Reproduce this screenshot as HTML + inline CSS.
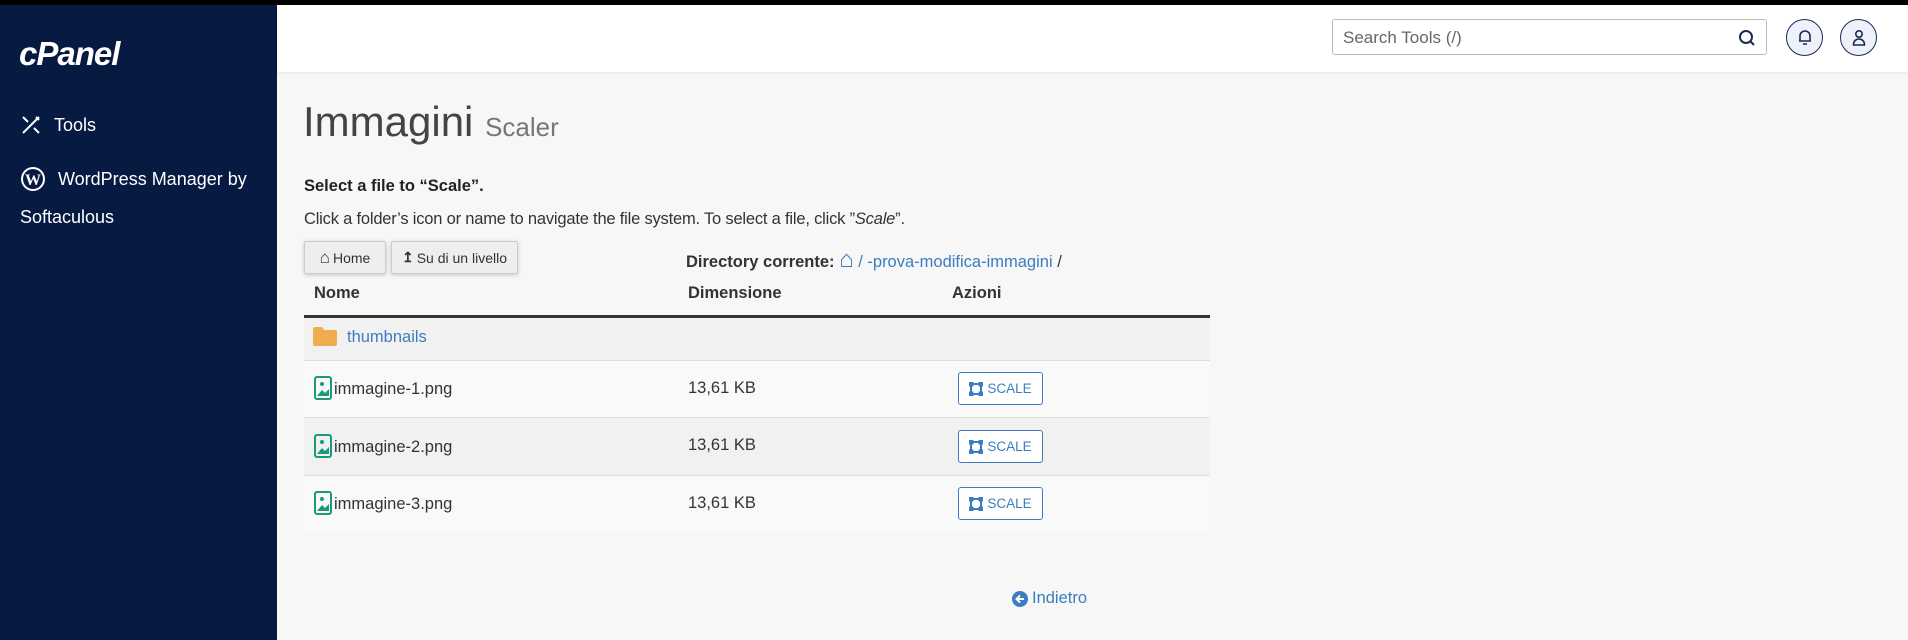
<!DOCTYPE html>
<html><head><meta charset="utf-8"><style>
*{box-sizing:border-box;margin:0;padding:0}
body{width:1908px;height:640px;overflow:hidden;background:#f7f7f7;font-family:"Liberation Sans",sans-serif;position:relative;color:#222}
.abs{position:absolute}
#top{left:0;top:0;width:1908px;height:5px;background:#000}
#side{left:0;top:5px;width:277px;height:635px;background:#061a42;color:#fff}
#hdr{left:277px;top:5px;width:1631px;height:67px;background:#fff;box-shadow:0 1px 3px rgba(0,0,0,.08)}
.side-item{position:absolute;left:20px;font-size:18px;color:#fff;display:flex;align-items:center}
.btn{position:absolute;height:33px;border:1px solid #ccc;background:#eee;border-radius:2px;box-shadow:0 1px 4px rgba(0,0,0,.2);font-size:14px;color:#333;display:flex;align-items:center;justify-content:center;gap:3px}
.row{position:absolute;left:304px;width:906px;border-bottom:1px solid #ddd}
.fname{position:absolute;left:334px;font-size:16.5px;color:#333}
.size{position:absolute;left:688px;font-size:16.5px;color:#333}
.scale{position:absolute;left:958px;width:85px;height:33px;border:1px solid #3b7dc0;border-radius:3px;color:#3b7dc0;font-size:13.5px;display:flex;align-items:center;justify-content:center;gap:4px;background:#fff}
.ficon{position:absolute;left:314px}
</style></head><body>
<div id="top" class="abs"></div>
<div id="side" class="abs">
  <div class="abs" style="left:19px;top:30px;font-size:33px;font-weight:bold;font-style:italic;letter-spacing:-1px;color:#fff">cPanel</div>
  <div class="side-item" style="top:109px">
    <svg width="22" height="22" viewBox="0 0 22 22" fill="none" stroke="#fff" stroke-width="2"><path d="M3 19L19 3M3 3l5 5M14 14l5 5M16 3l3 3"/></svg>
    <span style="margin-left:12px">Tools</span></div>
  <div class="side-item" style="top:161px">
    <svg width="26" height="26" viewBox="0 0 26 26"><circle cx="13" cy="13" r="12" fill="#fff"/><circle cx="13" cy="13" r="10" fill="#061a42"/><text x="13" y="19" font-family="Liberation Serif" font-size="16" font-weight="bold" fill="#fff" text-anchor="middle">W</text></svg>
    <span style="margin-left:12px">WordPress Manager by</span></div>
  <div class="side-item" style="top:202px;left:20px">Softaculous</div>
</div>
<div id="hdr" class="abs">
  <div class="abs" style="left:1055px;top:14px;width:435px;height:36px;border:1px solid #bbb;border-radius:3px;background:#fff">
    <span class="abs" style="left:10px;top:8px;font-size:17px;color:#666">Search Tools (/)</span>
    <svg class="abs" style="left:405px;top:9px" width="18" height="18" viewBox="0 0 18 18" fill="none" stroke="#1a2a55" stroke-width="2"><circle cx="8" cy="8" r="6"/><path d="M12.5 12.5L16 16"/></svg>
  </div>
  <div class="abs" style="left:1509px;top:14px;width:37px;height:37px;border:1.5px solid #1a2a55;border-radius:50%;background:#eef0fa">
    <svg class="abs" style="left:10px;top:9px" width="16" height="17" viewBox="0 0 16 17" fill="none" stroke="#1a2a55" stroke-width="1.6"><path d="M3 12V7a5 5 0 0110 0v5M2 12h12M6 15h4"/></svg></div>
  <div class="abs" style="left:1563px;top:14px;width:37px;height:37px;border:1.5px solid #1a2a55;border-radius:50%;background:#eef0fa">
    <svg class="abs" style="left:10px;top:9px" width="16" height="17" viewBox="0 0 16 17" fill="none" stroke="#1a2a55" stroke-width="1.6"><circle cx="8" cy="5" r="3.2"/><path d="M2.5 16c0-4 2.5-6 5.5-6s5.5 2 5.5 6z"/></svg></div>
</div>
<div class="abs" style="left:303px;top:98px;font-size:42px;color:#444">Immagini <span style="font-size:26px;color:#777">Scaler</span></div>
<div class="abs" style="left:304px;top:177px;font-size:16.5px;font-weight:bold">Select a file to “Scale”.</div>
<div class="abs" style="left:304px;top:210px;font-size:16.5px;color:#333;letter-spacing:-0.2px">Click a folder’s icon or name to navigate the file system. To select a file, click ”<i>Scale</i>”.</div>
<div class="btn" style="left:304px;top:241px;width:82px"><span style="font-size:17px">⌂</span><span>Home</span></div>
<div class="btn" style="left:391px;top:241px;width:127px"><b>↥</b><span>Su di un livello</span></div>
<div class="abs" style="left:686px;top:246px;font-size:16.5px;font-weight:bold;color:#333">Directory corrente: <span style="color:#3b7dc0;font-weight:normal"><span style="font-size:24px;font-weight:bold">⌂</span> / -prova-modifica-immagini </span><span style="font-weight:normal">/</span></div>
<div class="abs" style="left:314px;top:284px;font-size:16.5px;font-weight:bold;color:#333">Nome</div>
<div class="abs" style="left:688px;top:284px;font-size:16.5px;font-weight:bold;color:#333">Dimensione</div>
<div class="abs" style="left:952px;top:284px;font-size:16.5px;font-weight:bold;color:#333">Azioni</div>
<div class="abs" style="left:304px;top:315px;width:906px;height:3px;background:#333"></div>
<div class="row" style="top:318px;height:43px;background:#f1f1f1"></div>
<div class="row" style="top:361px;height:57px;background:#f9f9f9"></div>
<div class="row" style="top:418px;height:58px;background:#f1f1f1"></div>
<div class="row" style="top:476px;height:57px;background:#f9f9f9;border-bottom:none"></div>
<svg class="abs" style="left:313px;top:327px" width="24" height="19" viewBox="0 0 24 19"><path d="M0 2a2 2 0 012-2h7l2 3h11a2 2 0 012 2v12a2 2 0 01-2 2H2a2 2 0 01-2-2z" fill="#f0ad4e"/></svg>
<div class="abs" style="left:347px;top:328px;font-size:16.5px;color:#3b7dc0">thumbnails</div>
<svg class="ficon" style="top:376px" width="18" height="24" viewBox="0 0 18 24"><rect x="1" y="1" width="16" height="22" rx="2" fill="none" stroke="#1a9a7a" stroke-width="2"/><circle cx="8" cy="8" r="2" fill="#1a9a7a"/><path d="M3 20l5-6 3 3 4-4v7z" fill="#1a9a7a"/></svg>
<div class="fname" style="top:380px">immagine-1.png</div>
<svg class="ficon" style="top:434px" width="18" height="24" viewBox="0 0 18 24"><rect x="1" y="1" width="16" height="22" rx="2" fill="none" stroke="#1a9a7a" stroke-width="2"/><circle cx="8" cy="8" r="2" fill="#1a9a7a"/><path d="M3 20l5-6 3 3 4-4v7z" fill="#1a9a7a"/></svg>
<div class="fname" style="top:438px">immagine-2.png</div>
<svg class="ficon" style="top:491px" width="18" height="24" viewBox="0 0 18 24"><rect x="1" y="1" width="16" height="22" rx="2" fill="none" stroke="#1a9a7a" stroke-width="2"/><circle cx="8" cy="8" r="2" fill="#1a9a7a"/><path d="M3 20l5-6 3 3 4-4v7z" fill="#1a9a7a"/></svg>
<div class="fname" style="top:495px">immagine-3.png</div>
<div class="size" style="top:379px">13,61 KB</div>
<div class="size" style="top:436px">13,61 KB</div>
<div class="size" style="top:494px">13,61 KB</div>
<div class="scale" style="top:372px"><svg width="14" height="14" viewBox="0 0 14 14" fill="none" stroke="#3b7dc0" stroke-width="2"><rect x="2" y="2" width="10" height="10"/><rect x="0.5" y="0.5" width="3" height="3" fill="#3b7dc0"/><rect x="10.5" y="0.5" width="3" height="3" fill="#3b7dc0"/><rect x="0.5" y="10.5" width="3" height="3" fill="#3b7dc0"/><rect x="10.5" y="10.5" width="3" height="3" fill="#3b7dc0"/></svg>SCALE</div>
<div class="scale" style="top:430px"><svg width="14" height="14" viewBox="0 0 14 14" fill="none" stroke="#3b7dc0" stroke-width="2"><rect x="2" y="2" width="10" height="10"/><rect x="0.5" y="0.5" width="3" height="3" fill="#3b7dc0"/><rect x="10.5" y="0.5" width="3" height="3" fill="#3b7dc0"/><rect x="0.5" y="10.5" width="3" height="3" fill="#3b7dc0"/><rect x="10.5" y="10.5" width="3" height="3" fill="#3b7dc0"/></svg>SCALE</div>
<div class="scale" style="top:487px"><svg width="14" height="14" viewBox="0 0 14 14" fill="none" stroke="#3b7dc0" stroke-width="2"><rect x="2" y="2" width="10" height="10"/><rect x="0.5" y="0.5" width="3" height="3" fill="#3b7dc0"/><rect x="10.5" y="0.5" width="3" height="3" fill="#3b7dc0"/><rect x="0.5" y="10.5" width="3" height="3" fill="#3b7dc0"/><rect x="10.5" y="10.5" width="3" height="3" fill="#3b7dc0"/></svg>SCALE</div>
<div class="abs" style="left:1012px;top:589px;font-size:16.5px;color:#3b7dc0;display:flex;align-items:center;gap:4px"><svg width="16" height="16" viewBox="0 0 16 16"><circle cx="8" cy="8" r="8" fill="#3b7dc0"/><path d="M12 8H5M8 4.5L4.5 8 8 11.5" stroke="#fff" stroke-width="2" fill="none"/></svg>Indietro</div>
</body></html>
